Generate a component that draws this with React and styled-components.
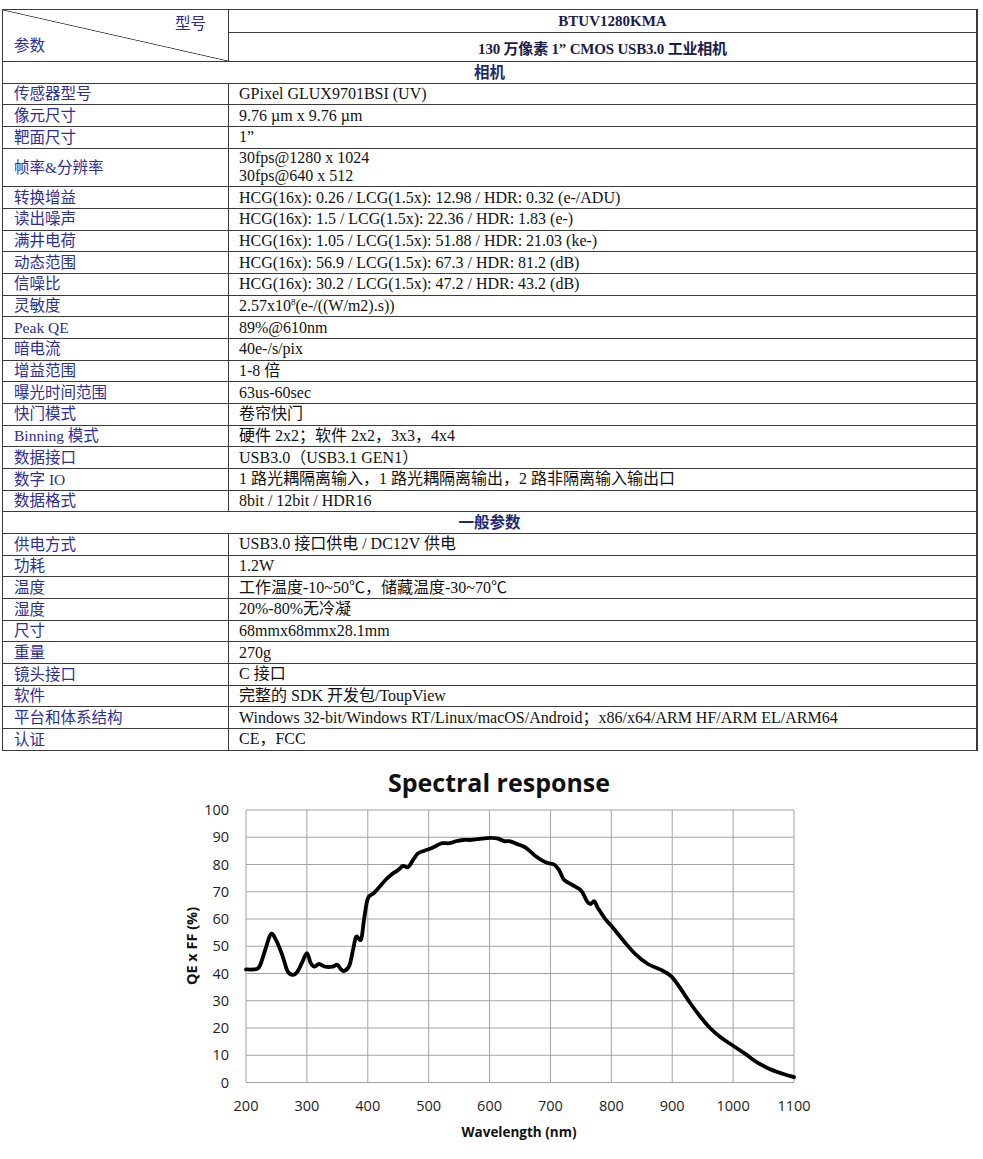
import React from "react"
import styled, { createGlobalStyle } from "styled-components"

const GlobalStyle = createGlobalStyle`
    body {
        margin: 0;
        background: #ffffff;
    }
`

const camera = [
    { label: "传感器型号", value: "GPixel GLUX9701BSI (UV)" },
    { label: "像元尺寸", value: "9.76 µm x 9.76 µm" },
    { label: "靶面尺寸", value: "1”" },
    { label: "帧率&分辨率", value: ["30fps@1280 x 1024", "30fps@640 x 512"] },
    { label: "转换增益", value: "HCG(16x): 0.26 / LCG(1.5x): 12.98 / HDR: 0.32 (e-/ADU)" },
    { label: "读出噪声", value: "HCG(16x): 1.5 / LCG(1.5x): 22.36 / HDR: 1.83 (e-)" },
    { label: "满井电荷", value: "HCG(16x): 1.05 / LCG(1.5x): 51.88 / HDR: 21.03 (ke-)" },
    { label: "动态范围", value: "HCG(16x): 56.9 / LCG(1.5x): 67.3 / HDR: 81.2 (dB)" },
    { label: "信噪比", value: "HCG(16x): 30.2 / LCG(1.5x): 47.2 / HDR: 43.2 (dB)" },
    { label: "灵敏度", value: <span>2.57x10<sup>8</sup>(e-/((W/m2).s))</span> },
    { label: "Peak QE", value: "89%@610nm" },
    { label: "暗电流", value: "40e-/s/pix" },
    { label: "增益范围", value: "1-8 倍" },
    { label: "曝光时间范围", value: "63us-60sec" },
    { label: "快门模式", value: "卷帘快门" },
    { label: "Binning 模式", value: "硬件 2x2；软件 2x2，3x3，4x4" },
    { label: "数据接口", value: "USB3.0（USB3.1 GEN1）" },
    { label: "数字 IO", value: "1 路光耦隔离输入，1 路光耦隔离输出，2 路非隔离输入输出口" },
    { label: "数据格式", value: "8bit / 12bit / HDR16" },
]

const general = [
    { label: "供电方式", value: "USB3.0 接口供电 / DC12V 供电" },
    { label: "功耗", value: "1.2W" },
    { label: "温度", value: "工作温度-10~50℃，储藏温度-30~70℃" },
    { label: "湿度", value: "20%-80%无冷凝" },
    { label: "尺寸", value: "68mmx68mmx28.1mm" },
    { label: "重量", value: "270g" },
    { label: "镜头接口", value: "C 接口" },
    { label: "软件", value: "完整的 SDK 开发包/ToupView" },
    { label: "平台和体系结构", value: "Windows 32-bit/Windows RT/Linux/macOS/Android；x86/x64/ARM HF/ARM EL/ARM64" },
    { label: "认证", value: "CE，FCC" },
]

// spectral response curve, [nm, %]
const curve = [
    [200, 41.5], [212, 41.5], [222, 42.5], [232, 49], [241, 54.5], [250, 52], [260, 46.5],
    [268, 41], [276, 39.5], [284, 40.5], [292, 44], [300, 47.5], [306, 44], [312, 42.5],
    [320, 43.5], [330, 42.5], [342, 42.5], [350, 43.2], [356, 41.5], [362, 41], [370, 43],
    [376, 49], [381, 53.5], [389, 52.5], [394, 60], [400, 67.5], [410, 69.5], [420, 72],
    [430, 74.5], [440, 76.5], [450, 78], [458, 79.5], [466, 79], [474, 81.5], [482, 84],
    [492, 85], [502, 85.8], [512, 86.8], [522, 87.8], [534, 87.8], [544, 88.5], [556, 89],
    [568, 89], [580, 89.3], [592, 89.6], [604, 89.8], [614, 89.5], [624, 88.6], [634, 88.5],
    [644, 87.6], [656, 86.6], [666, 85], [676, 83], [686, 81.5], [696, 80.5], [706, 80],
    [714, 78], [722, 74.5], [732, 73], [744, 71.5], [752, 70], [760, 66.5], [766, 65.5],
    [772, 66.5], [778, 64], [790, 60], [800, 57.5], [820, 52], [840, 47], [860, 43.5],
    [880, 41.5], [898, 39], [915, 34], [930, 29], [945, 24.5], [962, 20], [980, 16.5],
    [1000, 13.5], [1020, 10.5], [1040, 7.3], [1060, 5], [1080, 3.3], [1100, 2],
]

const X0 = 246
const X1 = 794
const YTOP = 49
const YBOT = 321.5
const px = nm => X0 + (nm - 200) * (X1 - X0) / 900
const py = v => YBOT - v * (YBOT - YTOP) / 100

function smoothPath(points) {
    const p = points.map(([x, y]) => [px(x), py(y)])
    let d = `M ${p[0][0].toFixed(1)} ${p[0][1].toFixed(1)}`
    for (let i = 0; i < p.length - 1; i++) {
        const a = p[i - 1] || p[i]
        const b = p[i]
        const c = p[i + 1]
        const e = p[i + 2] || c
        const c1x = b[0] + (c[0] - a[0]) / 6
        const c1y = b[1] + (c[1] - a[1]) / 6
        const c2x = c[0] - (e[0] - b[0]) / 6
        const c2y = c[1] - (e[1] - b[1]) / 6
        d += ` C ${c1x.toFixed(1)} ${c1y.toFixed(1)} ${c2x.toFixed(1)} ${c2y.toFixed(1)} ${c[0].toFixed(1)} ${c[1].toFixed(1)}`
    }
    return d
}

function SpecRow({ item }) {
    const multi = Array.isArray(item.value)
    return (
        <Row tall={multi}>
            <Label>{item.label}</Label>
            <Value>
                {multi ? item.value.map(v => <Line key={v}>{v}</Line>) : item.value}
            </Value>
        </Row>
    )
}

function Chart() {
    const xs = [200, 300, 400, 500, 600, 700, 800, 900, 1000, 1100]
    const ys = [0, 10, 20, 30, 40, 50, 60, 70, 80, 90, 100]
    return (
        <ChartSvg width="983" height="399" viewBox="0 0 983 399">
            <text x="499" y="31" textAnchor="middle" fontSize="25" fontWeight="700" fill="#111">Spectral response</text>
            {ys.map(v => <line key={"h" + v} x1={X0} x2={X1} y1={py(v)} y2={py(v)} stroke="#a3a3a3" strokeWidth="1" />)}
            {xs.map(v => <line key={"v" + v} x1={px(v)} x2={px(v)} y1={YTOP} y2={YBOT} stroke="#a3a3a3" strokeWidth="1" />)}
            {ys.map(v => <text key={"yl" + v} x="229" y={py(v) + 5} textAnchor="end" fontSize="14.5" fill="#222">{v}</text>)}
            {xs.map(v => <text key={"xl" + v} x={px(v)} y="350" textAnchor="middle" fontSize="14.5" fill="#222">{v}</text>)}
            <text x="519" y="376" textAnchor="middle" fontSize="13.5" fontWeight="700" fill="#111">Wavelength (nm)</text>
            <text x="0" y="0" transform="translate(197 185) rotate(-90)" textAnchor="middle" fontSize="14.5" fontWeight="700" fill="#111">QE x FF (%)</text>
            <path d={smoothPath(curve)} fill="none" stroke="#000" strokeWidth="3.8" strokeLinejoin="round" strokeLinecap="round" />
        </ChartSvg>
    )
}

export default function App() {
    return (
        <Page>
            <GlobalStyle />
            <Table>
                <HeaderRow>
                    <Corner>
                        <CornerTop>型号</CornerTop>
                        <CornerBottom>参数</CornerBottom>
                    </Corner>
                    <HeaderStack>
                        <Model>BTUV1280KMA</Model>
                        <Title>130 万像素 1” CMOS USB3.0 工业相机</Title>
                    </HeaderStack>
                </HeaderRow>
                <Section>相机</Section>
                {camera.map(x => <SpecRow key={x.label} item={x} />)}
                <Section>一般参数</Section>
                {general.map(x => <SpecRow key={x.label} item={x} />)}
            </Table>
            <Chart />
        </Page>
    )
}

const Page = styled.div`
    width: 983px;
    padding-top: 9px;
    font-family: "Liberation Serif", "Noto Sans CJK SC", serif;
`
const Table = styled.div`
    margin-left: 2px;
    width: 973px;
    border: 1px solid #3a3a3a;
    border-right-width: 2px;
    border-bottom: none;
`
const HeaderRow = styled.div`
    display: grid;
    grid-template-columns: 226px 1fr;
    height: 51px;
    border-bottom: 1px solid #3a3a3a;
`
const Corner = styled.div`
    display: flex;
    flex-direction: column;
    justify-content: space-between;
    padding: 6px 22px 8px 11px;
    border-right: 1px solid #3a3a3a;
    color: #2d2d96;
    font-size: 15.5px;
    line-height: 1;
    background: linear-gradient(to top right, transparent calc(50% - 0.8px), #3a3a3a 50%, transparent calc(50% + 0.8px));
`
const CornerTop = styled.span`
    align-self: flex-end;
`
const CornerBottom = styled.span`
    align-self: flex-start;
`
const HeaderStack = styled.div`
    display: grid;
    grid-template-rows: 23px 1fr;
`
const Model = styled.div`
    display: flex;
    align-items: center;
    justify-content: center;
    border-bottom: 1px solid #3a3a3a;
    font-size: 15px;
    font-weight: 700;
    color: #1c1c4a;
    padding-left: 20px;
`
const Title = styled.div`
    display: flex;
    align-items: center;
    justify-content: center;
    font-size: 15px;
    font-weight: 700;
    color: #1c1c4a;
    letter-spacing: -0.2px;
`
const Section = styled.div`
    height: 20.68px;
    display: flex;
    align-items: center;
    justify-content: center;
    border-bottom: 1px solid #3a3a3a;
    font-size: 15.5px;
    line-height: 1;
    font-weight: 700;
    color: #1f2a6e;
`
const Row = styled.div`
    display: grid;
    grid-template-columns: 226px 1fr;
    height: ${props => props.tall ? "37.5px" : "20.68px"};
    border-bottom: 1px solid #3a3a3a;
`
const Label = styled.div`
    display: flex;
    align-items: center;
    padding-left: 11px;
    border-right: 1px solid #3a3a3a;
    font-size: 15.5px;
    line-height: 1;
    color: #2d2d96;
    white-space: nowrap;
`
const Value = styled.div`
    display: flex;
    flex-direction: column;
    justify-content: center;
    padding-left: 10px;
    font-size: 16px;
    line-height: 1;
    color: #111;
    white-space: nowrap;
    sup {
        font-size: 9px;
        vertical-align: 6px;
        line-height: 0;
    }
`
const Line = styled.span`
    line-height: 18px;
`
const ChartSvg = styled.svg`
    display: block;
    margin-top: 10px;
    font-family: "Open Sans", Lato, sans-serif;
`
